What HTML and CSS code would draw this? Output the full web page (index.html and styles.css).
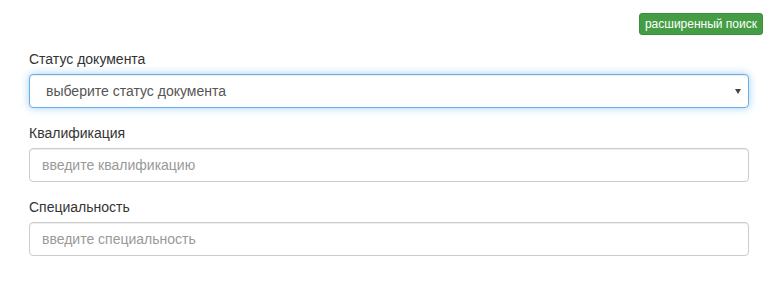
FILE: index.html
```html
<!DOCTYPE html>
<html lang="ru">
<head>
  <meta charset="UTF-8" />
  <meta name="viewport" content="width=device-width, initial-scale=1.0"/>
  <title>Поиск документов</title>
  <link rel="stylesheet" href="styles.css">
</head>
<body>
  <div class="page">
    <div class="toolbar">
      <button type="button" class="btn-search">расширенный поиск</button>
    </div>

    <form class="search-form">
      <div class="form-group">
        <label for="status">Статус документа</label>
        <div class="select-wrap">
          <select id="status" class="form-control is-focused">
            <option>выберите статус документа</option>
          </select>
        </div>
      </div>
      <div class="form-group">
        <label for="qual">Квалификация</label>
        <input id="qual" type="text" class="form-control" placeholder="введите квалификацию">
      </div>
      <div class="form-group">
        <label for="spec">Специальность</label>
        <input id="spec" type="text" class="form-control" placeholder="введите специальность">
      </div>
    </form>
  </div>
</body>
</html>
```

FILE: styles.css
```css
body {
  margin: 0;
  background: #fff;
  font-family: "Liberation Sans", Arial, sans-serif;
  font-size: 14px;
  line-height: 20px;
  color: #333;
}

.page {
  padding: 13px 16px 0 29px;
}

.toolbar {
  display: flex;
  justify-content: flex-end;
}

.btn-search {
  font-family: inherit;
  font-size: 12px;
  line-height: 18px;
  padding: 1px 5px;
  color: #fff;
  background: #449d44;
  border: 1px solid #3d8b3d;
  border-radius: 3px;
  cursor: pointer;
}

.search-form {
  width: 720px;
  margin-top: 14px;
}

.form-group {
  margin-bottom: 15px;
}

label {
  display: block;
  margin-bottom: 5px;
  color: #333;
}

.form-control {
  display: block;
  box-sizing: border-box;
  width: 100%;
  height: 34px;
  padding: 6px 12px;
  font-family: inherit;
  font-size: 14px;
  line-height: 20px;
  color: #555;
  background: #fff;
  border: 1px solid #ccc;
  border-radius: 4px;
  box-shadow: inset 0 1px 1px rgba(0, 0, 0, 0.075);
  outline: none;
}

.form-control::placeholder {
  color: #999;
}

.form-control.is-focused {
  border-color: #66afe9;
  box-shadow: inset 0 1px 1px rgba(0, 0, 0, 0.075), 0 0 8px rgba(102, 175, 233, 0.6);
}

.select-wrap {
  position: relative;
}

.select-wrap select {
  -webkit-appearance: none;
  appearance: none;
  padding-left: 16px;
}

.select-wrap::after {
  content: "";
  position: absolute;
  right: 8px;
  top: 15px;
  border-left: 3px solid transparent;
  border-right: 3px solid transparent;
  border-top: 5px solid #444;
}
```
